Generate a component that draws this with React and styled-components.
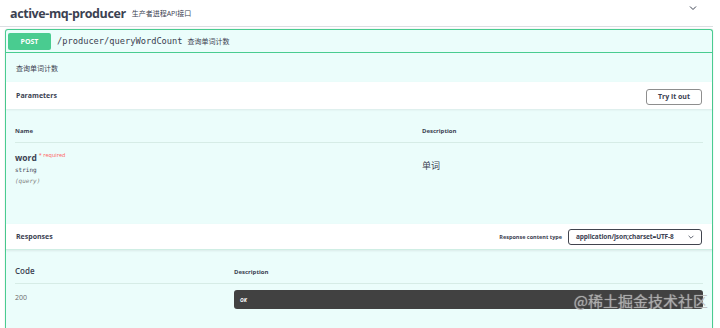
import React from 'react';
import styled, { createGlobalStyle } from 'styled-components';

const GlobalStyle = createGlobalStyle`
  html, body {
    margin: 0;
    padding: 0;
    background: #fff;
  }
  body {
    font-family: "Open Sans", "Noto Sans CJK SC", sans-serif;
    color: #3b4151;
  }
`;

const CJK = '"Open Sans", "Noto Sans CJK SC", sans-serif';
const MONO = '"DejaVu Sans Mono", "Liberation Mono", monospace';

const Page = styled.div`
  position: relative;
  width: 720px;
  height: 328px;
  overflow: hidden;
`;

const TagHeader = styled.div`
  display: flex;
  align-items: center;
  height: 26px;
  margin-right: 7px;
  padding: 0 10px;
  border-bottom: 1px solid #dcdee3;
`;

const TagTitle = styled.h3`
  margin: 0;
  font-size: 12.5px;
  font-weight: 700;
  letter-spacing: -0.4px;
  color: #3b4151;
`;

const TagDesc = styled.small`
  margin-left: 6px;
  font-family: ${CJK};
  font-size: 7px;
  color: #3b4151;
  flex: 1;
`;

const Chevron = styled.svg`
  display: block;
  width: 10px;
  height: 10px;
`;

const HeaderToggle = styled.div`
  align-self: flex-start;
  margin: 3px 5px 0 0;
`;

const Opblock = styled.div`
  margin: 2px 7px 0 5px;
  border: 1px solid #49cc90;
  border-bottom: none;
  border-radius: 3px 3px 0 0;
  background: #ebfdfb;
  box-shadow: 0 0 2px rgba(0, 0, 0, 0.12);
  height: 320px;
`;

const Summary = styled.div`
  display: flex;
  align-items: center;
  height: 22px;
  padding: 0 2px;
  border-bottom: 1px solid #49cc90;
`;

const MethodBadge = styled.span`
  display: flex;
  align-items: center;
  justify-content: center;
  width: 43px;
  height: 17px;
  border-radius: 2px;
  background: #49cc90;
  color: #fff;
  font-size: 7px;
  font-weight: 700;
`;

const Path = styled.span`
  margin-left: 6px;
  font-family: ${MONO};
  font-size: 8.7px;
  color: #3b4151;
`;

const SummaryDesc = styled.span`
  margin-left: 5px;
  font-size: 7px;
  color: #3b4151;
`;

const OpDescription = styled.div`
  height: 29px;
  display: flex;
  align-items: center;
  padding: 0 10px;
  font-size: 7px;
`;

const SectionHeader = styled.div`
  display: flex;
  align-items: center;
  justify-content: space-between;
  height: ${({ h }) => h}px;
  padding: 0 10px;
  background: #fff;
  box-shadow: 0 1px 2px rgba(0, 0, 0, 0.08);
  border-bottom: ${({ line }) => (line ? '1px solid #cfeee4' : 'none')};
`;

const SectionTitle = styled.h4`
  margin: 0;
  font-size: 7px;
  font-weight: 700;
  color: #3b4151;
`;

const TryButton = styled.button`
  width: 56px;
  height: 16px;
  margin-top: 2px;
  padding: 0;
  border: 1.5px solid #8e8e8e;
  border-radius: 3px;
  background: transparent;
  font-family: "Open Sans", sans-serif;
  font-size: 7px;
  font-weight: 700;
  color: #3b4151;
`;

const Table = styled.div`
  padding: 0 9px;
`;

const HeadRow = styled.div`
  display: grid;
  grid-template-columns: ${({ cols }) => cols};
  height: ${({ h }) => h}px;
  align-items: end;
  padding-bottom: 7px;
  box-sizing: border-box;
  border-bottom: 1px solid #d6ece6;
`;

const HeadCell = styled.div`
  font-size: ${({ size }) => size || 6}px;
  font-weight: ${({ weight }) => weight || 700};
  color: #3b4151;
`;

const Row = styled.div`
  display: grid;
  grid-template-columns: ${({ cols }) => cols};
  height: ${({ h }) => h || 'auto'};
  padding-top: ${({ pt }) => pt}px;
`;

const ParamName = styled.div`
  font-size: 8.5px;
  font-weight: 700;
  line-height: 12px;

  span {
    font-size: 5.5px;
    font-weight: 400;
    color: #ff6060;
    vertical-align: 4px;
    margin-left: 2px;
  }
`;

const ParamType = styled.div`
  margin-top: 2px;
  font-family: ${MONO};
  font-size: 6px;
  color: #3b4151;
`;

const ParamIn = styled.div`
  margin-top: 4px;
  font-family: ${MONO};
  font-size: 6px;
  font-style: italic;
  color: #808080;
`;

const ParamDesc = styled.div`
  padding-top: 10px;
  font-size: 9px;
  color: #3b4151;
`;

const ContentType = styled.div`
  display: flex;
  align-items: center;
  gap: 6px;
  font-size: 5.5px;
  font-weight: 700;
  white-space: nowrap;
`;

const Select = styled.div`
  display: flex;
  align-items: center;
  justify-content: space-between;
  width: 134px;
  height: 16px;
  box-sizing: border-box;
  padding: 0 6px 0 7px;
  border: 1.5px solid #41444e;
  border-radius: 3px;
  background: #fff;
  font-size: 6.5px;
  font-weight: 700;
  letter-spacing: -0.1px;
  white-space: nowrap;
`;

const Code = styled.div`
  font-size: 7px;
  color: #6b6b6b;
  padding-top: 3px;
`;

const Example = styled.div`
  height: 19px;
  display: flex;
  align-items: center;
  padding-left: 6px;
  border-radius: 3px;
  background: #414141;
  color: #fff;
  font-size: 5px;
  font-weight: 700;
  font-style: italic;
`;

const Watermark = styled.div`
  position: absolute;
  right: 12px;
  bottom: 17px;
  font-family: "Noto Sans CJK SC", sans-serif;
  font-size: 15px;
  color: rgba(175, 175, 175, 0.75);
  text-shadow: 0 0 1px rgba(255, 255, 255, 0.6);
`;

const Arrow = ({ size = 10 }) => (
  <Chevron viewBox="0 0 20 20" style={{ width: size, height: size }}>
    <path d="M4 7l6 6 6-6" fill="none" stroke="#3b4151" strokeWidth="2" />
  </Chevron>
);

export default function App() {
  return (
    <Page>
      <GlobalStyle />
      <TagHeader>
        <TagTitle>active-mq-producer</TagTitle>
        <TagDesc>生产者进程API接口</TagDesc>
        <HeaderToggle>
          <Arrow />
        </HeaderToggle>
      </TagHeader>

      <Opblock>
        <Summary>
          <MethodBadge>POST</MethodBadge>
          <Path>/producer/queryWordCount</Path>
          <SummaryDesc>查询单词计数</SummaryDesc>
        </Summary>

        <OpDescription>查询单词计数</OpDescription>

        <SectionHeader h={27}>
          <SectionTitle>Parameters</SectionTitle>
          <TryButton>Try it out</TryButton>
        </SectionHeader>

        <Table>
          <HeadRow cols="407px 1fr" h={34}>
            <HeadCell>Name</HeadCell>
            <HeadCell>Description</HeadCell>
          </HeadRow>
          <Row cols="407px 1fr" pt={6} h="75px">
            <div>
              <ParamName>
                word<span>* required</span>
              </ParamName>
              <ParamType>string</ParamType>
              <ParamIn>(query)</ParamIn>
            </div>
            <ParamDesc>单词</ParamDesc>
          </Row>
        </Table>

        <SectionHeader h={25} line>
          <SectionTitle>Responses</SectionTitle>
          <ContentType>
            Response content type
            <Select>
              application/json;charset=UTF-8
              <Arrow size={8} />
            </Select>
          </ContentType>
        </SectionHeader>

        <Table>
          <HeadRow cols="219px 1fr" h={34}>
            <HeadCell size={8} weight={600}>Code</HeadCell>
            <HeadCell>Description</HeadCell>
          </HeadRow>
          <Row cols="219px 1fr" pt={6}>
            <Code>200</Code>
            <Example>OK</Example>
          </Row>
        </Table>
      </Opblock>

      <Watermark>@稀土掘金技术社区</Watermark>
    </Page>
  );
}
